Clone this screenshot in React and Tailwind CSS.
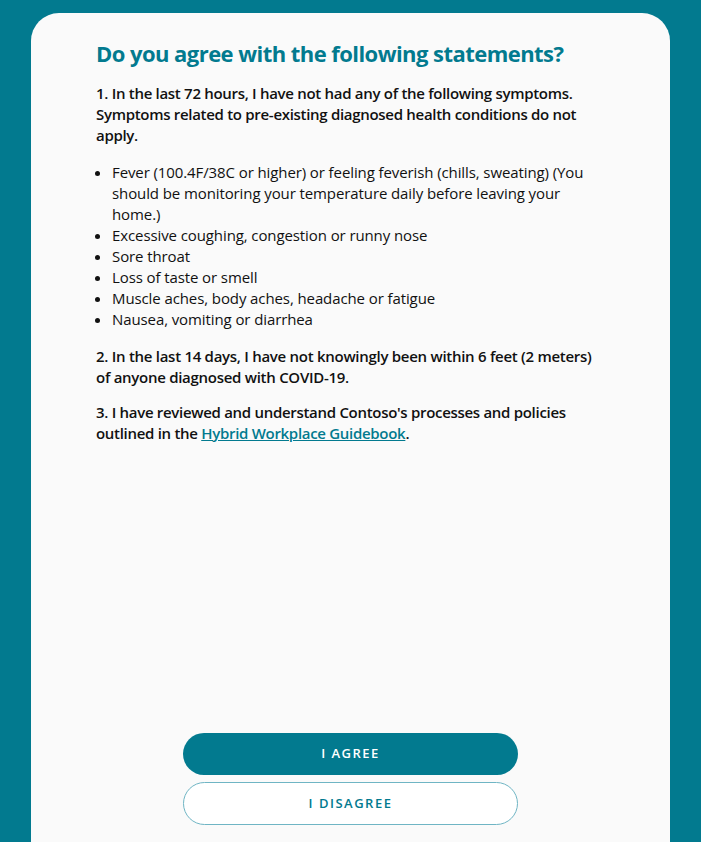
import React from "react";

const symptoms = [
  "Fever (100.4F/38C or higher) or feeling feverish (chills, sweating) (You should be monitoring your temperature daily before leaving your home.)",
  "Excessive coughing, congestion or runny nose",
  "Sore throat",
  "Loss of taste or smell",
  "Muscle aches, body aches, headache or fatigue",
  "Nausea, vomiting or diarrhea",
];

const App = () => {
  return (
    <div
      className="h-[842px] w-full overflow-hidden bg-[#027a8f] px-[31px] pt-[13px] flex flex-col"
      style={{ fontFamily: '"Segoe UI", "Open Sans", sans-serif' }}
    >
      <div className="flex-1 flex flex-col bg-[#fafafa] rounded-t-[28px] px-[65px] pt-[26px]">
        <h1 className="text-[22px] leading-[29px] font-bold text-[#027a8f] tracking-[-0.55px]">
          Do you agree with the following statements?
        </h1>
        <p className="mt-[15px] text-[15px] leading-[21px] font-semibold text-[#111] tracking-[-0.3px]">
          1. In the last 72 hours, I have not had any of the following symptoms.
          Symptoms related to pre-existing diagnosed health conditions do not
          apply.
        </p>
        <ul className="mt-[16px] list-disc pl-4 text-[15px] leading-[21px] text-[#111] tracking-[-0.1px]">
          {symptoms.map((s) => (
            <li key={s}>{s}</li>
          ))}
        </ul>
        <p className="mt-[16px] text-[15px] leading-[21px] font-semibold text-[#111] tracking-[-0.28px]">
          2. In the last 14 days, I have not knowingly been within 6 feet (2
          meters) of anyone diagnosed with COVID-19.
        </p>
        <p className="mt-[14px] text-[15px] leading-[21px] font-semibold text-[#111] tracking-[-0.3px]">
          3. I have reviewed and understand Contoso's processes and policies
          outlined in the{" "}
          <a href="#" className="text-[#027a8f] underline">
            Hybrid Workplace Guidebook
          </a>
          .
        </p>
        <div className="mt-auto flex flex-col items-center gap-[7px] pb-[17px]">
          <button className="w-[335px] h-[42px] rounded-full bg-[#027a8f] text-white text-[13px] font-semibold tracking-[1.5px]">
            I AGREE
          </button>
          <button className="w-[335px] h-[43px] rounded-full bg-white border border-[#6fb5c4] text-[#027a8f] text-[13px] font-semibold tracking-[1.5px]">
            I DISAGREE
          </button>
        </div>
      </div>
    </div>
  );
};

export default App;
